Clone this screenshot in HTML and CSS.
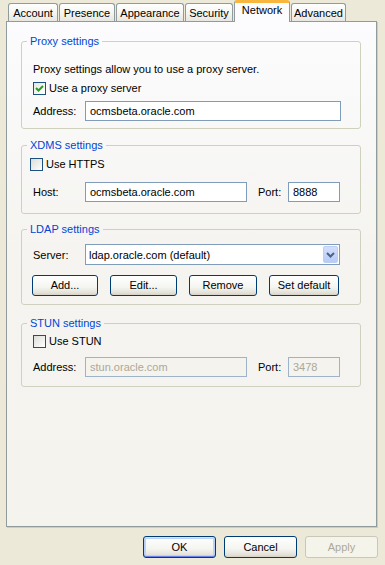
FILE: index.html
```html
<!DOCTYPE html>
<html>
  <head>
    <meta charset="UTF-8">
    <title>Preferences - Network</title>
    <link rel="stylesheet" href="styles.css">
  </head>
  <body>
    <div class="tabs">
      <div class="tab tab-account">Account</div>
      <div class="tab tab-presence">Presence</div>
      <div class="tab tab-appearance">Appearance</div>
      <div class="tab tab-security">Security</div>
      <div class="tab tab-network selected">Network</div>
      <div class="tab tab-advanced">Advanced</div>
    </div>

    <div class="panel">
      <fieldset class="group group-proxy">
        <legend>Proxy settings</legend>
        <div class="note">Proxy settings allow you to use a proxy server.</div>
        <div class="check">
          <span class="box checked"><svg width="11" height="11" viewBox="0 0 11 11"><polyline points="2,5 4.5,7.5 9,3" fill="none" stroke="#21a121" stroke-width="2"/></svg></span>Use a proxy server
        </div>
        <div class="row">
          <span class="label">Address:</span>
          <span class="field w-long">ocmsbeta.oracle.com</span>
        </div>
      </fieldset>

      <fieldset class="group group-xdms">
        <legend>XDMS settings</legend>
        <div class="check check-left"><span class="box"></span>Use HTTPS</div>
        <div class="row">
          <span class="label">Host:</span>
          <span class="field w-host">ocmsbeta.oracle.com</span>
          <span class="port-label">Port:</span>
          <span class="field w-port">8888</span>
        </div>
      </fieldset>

      <fieldset class="group group-ldap">
        <legend>LDAP settings</legend>
        <div class="row">
          <span class="label">Server:</span>
          <span class="field select">ldap.oracle.com (default)<span class="drop"><svg width="15" height="17" viewBox="0 0 15 17"><polyline points="4,7 7.5,10.5 11,7" fill="none" stroke="#4d6185" stroke-width="2"/></svg></span></span>
        </div>
        <div class="btn-row">
          <div class="btn w-add">Add...</div>
          <div class="btn w-edit">Edit...</div>
          <div class="btn w-remove">Remove</div>
          <div class="btn w-default">Set default</div>
        </div>
      </fieldset>

      <fieldset class="group group-stun">
        <legend>STUN settings</legend>
        <div class="check"><span class="box"></span>Use STUN</div>
        <div class="row">
          <span class="label">Address:</span>
          <span class="field w-host disabled">stun.oracle.com</span>
          <span class="port-label">Port:</span>
          <span class="field w-port disabled">3478</span>
        </div>
      </fieldset>
    </div>

    <div class="footer">
      <div class="btn dlg-btn default">OK</div>
      <div class="btn dlg-btn">Cancel</div>
      <div class="btn dlg-btn off">Apply</div>
    </div>
  </body>
</html>
```

FILE: styles.css
```css
body {
  margin:0;
  width:385px;
  height:565px;
  background-color:#ece9d8;
  font-family:"Liberation Sans", Arial, sans-serif;
  font-size:11px;
  color:#000000;
}

/* tab strip */
.tabs {
  display:flex;
  align-items:flex-end;
  gap:1px;
  height:21px;
  padding-left:8px;
}
.tab {
  box-sizing:border-box;
  height:18px;
  padding-top:1px;
  line-height:16px;
  text-align:center;
  border:1px solid #919b9c;
  border-bottom:none;
  border-radius:3px 3px 0 0;
  background:linear-gradient(#ffffff, #f3f3ef 60%, #e7e6df);
}
.tab.selected {
  position:relative;
  z-index:1;
  height:22px;
  margin-bottom:-1px;
  padding-top:0;
  line-height:15px;
  border-top:3px solid #f8b63f;
  background:#fcfcfe;
}
.tab-account { width:50px; }
.tab-presence { width:56px; }
.tab-appearance { width:68px; }
.tab-security { width:48px; }
.tab-network { width:56px; }
.tab-advanced { width:55px; }

/* page panel */
.panel {
  box-sizing:border-box;
  width:371px;
  height:506px;
  margin-left:6px;
  padding:13px 15px 0 14px;
  border:1px solid #919b9c;
  background:linear-gradient(#fcfcfe, #f5f4f0 45%, #f4f3ee);
  box-shadow:1px 1px 0 #d0cdbd;
}

.group {
  box-sizing:border-box;
  margin:0;
  padding:0 11px;
  min-width:0;
  border:1px solid #d0d0bf;
  border-radius:3px;
}
.group legend {
  margin-left:-6px;
  padding:0 3px;
  line-height:13px;
  color:#0046d5;
}
.group-proxy { height:94px; padding-top:14px; }
.group-xdms { height:75px; margin-top:10px; padding-top:6px; }
.group-ldap { height:82px; margin-top:9px; padding-top:8px; }
.group-stun { height:70px; margin-top:12px; padding-top:5px; }

.note {
  line-height:14px;
}

/* checkboxes */
.check {
  display:flex;
  align-items:center;
  height:13px;
  line-height:13px;
  margin-top:6px;
}
.group-xdms .check, .group-stun .check {
  margin-top:0;
}
.check-left {
  margin-left:-3px;
}
.box {
  box-sizing:border-box;
  display:flex;
  align-items:center;
  justify-content:center;
  width:13px;
  height:13px;
  margin-right:3px;
  border:1px solid #1c5180;
  background:linear-gradient(135deg, #dcdcd7, #ffffff);
}
.box.checked {
  background:linear-gradient(135deg, #e6e6e1, #ffffff);
}

/* rows with fields */
.row {
  display:flex;
  align-items:center;
  height:20px;
  margin-top:6px;
}
.group-xdms .row { margin-top:11px; }
.group-ldap .row { margin-top:0; height:21px; }
.group-stun .row { margin-top:9px; }
.label {
  width:52px;
  flex:none;
}
.port-label {
  width:30px;
  margin-left:11px;
  flex:none;
}
.field {
  box-sizing:border-box;
  display:flex;
  align-items:center;
  height:20px;
  padding-left:4px;
  border:1px solid #7f9db9;
  background-color:#ffffff;
  flex:none;
}
.field.disabled {
  background-color:#f4f3ee;
  color:#aca899;
  border-color:#9fb3c8;
}
.w-long { width:256px; }
.w-host { width:162px; }
.w-port { width:52px; }
.select {
  position:relative;
  width:255px;
  height:21px;
  padding-left:3px;
}
.drop {
  position:absolute;
  right:1px;
  top:1px;
  box-sizing:border-box;
  width:15px;
  height:17px;
  border:1px solid #bccdf6;
  border-radius:2px;
  background:linear-gradient(#d2defc, #b7cbf7);
}
.drop svg {
  display:block;
  margin:-1px 0 0 -1px;
}

/* buttons */
.btn-row {
  display:flex;
  gap:12px;
  margin-top:10px;
  margin-left:-1px;
}
.btn {
  box-sizing:border-box;
  height:21px;
  line-height:19px;
  text-align:center;
  border:1px solid #003c74;
  border-radius:3px;
  background:linear-gradient(#ffffff, #f4f4f0 60%, #e3e0d6 90%, #d6d0c5);
}
.w-add { width:66px; }
.w-edit { width:67px; }
.w-remove { width:68px; }
.w-default { width:70px; }

.footer {
  display:flex;
  justify-content:flex-end;
  gap:8px;
  margin-top:9px;
  padding-right:7px;
}
.dlg-btn {
  width:73px;
  height:22px;
  line-height:20px;
}
.dlg-btn.default {
  box-shadow:inset 0 1px 0 #cee7ff, inset 0 -1px 0 #6982ee, inset 1px 0 0 #b8d0f8, inset -1px 0 0 #b8d0f8, inset 0 0 0 2px #bcd2f9;
}
.dlg-btn.off {
  border-color:#c9c7ba;
  background:#f5f4ea;
  color:#aca899;
}
```
